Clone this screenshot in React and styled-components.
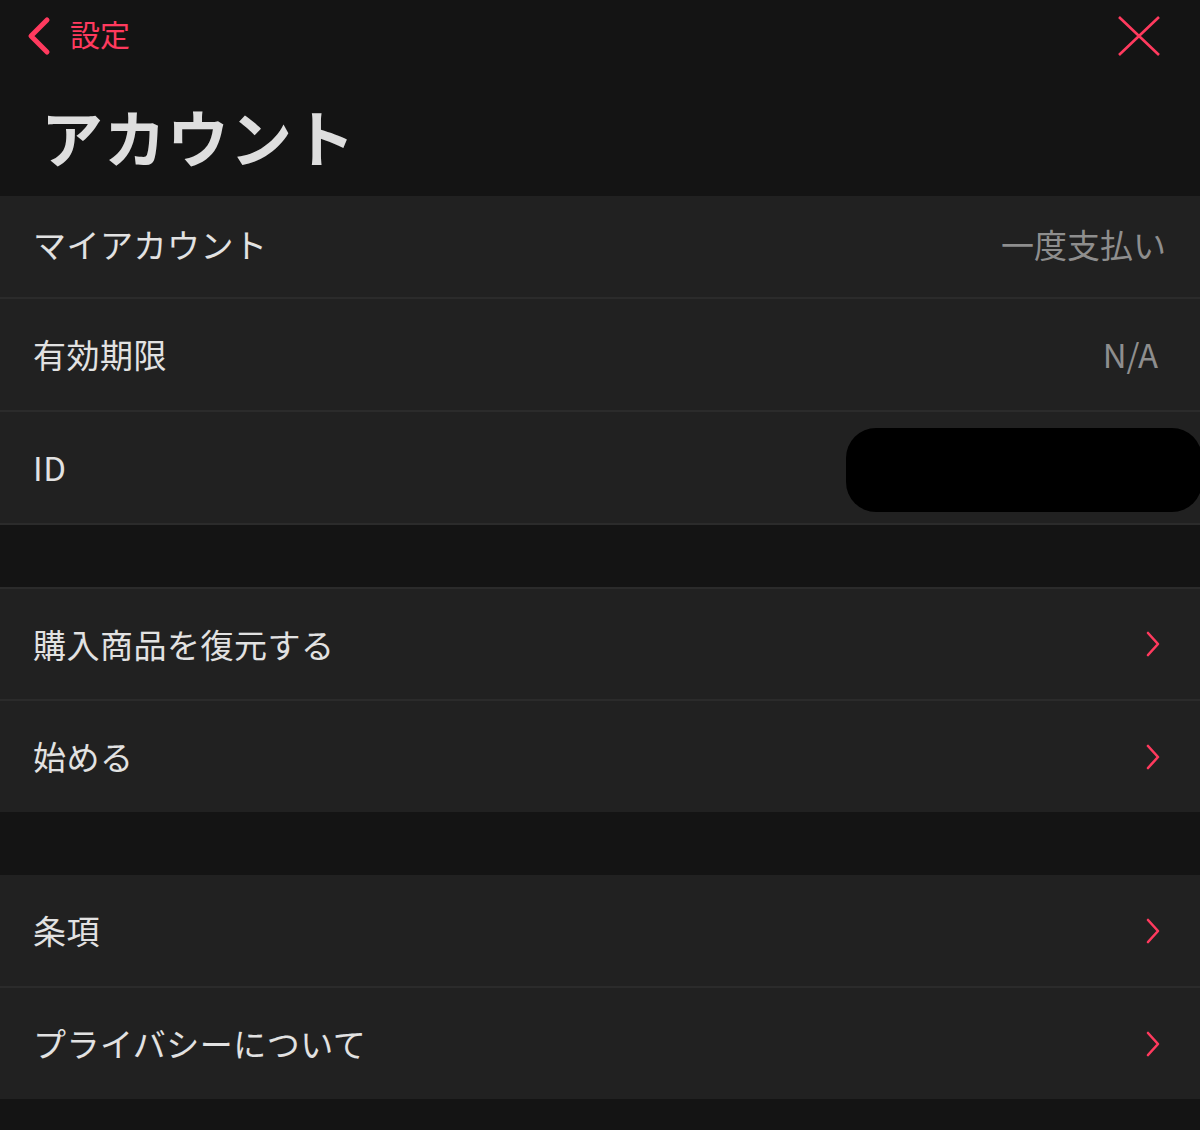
import styled, { createGlobalStyle } from 'styled-components';

const GlobalStyle = createGlobalStyle`
  html, body {
    margin: 0;
    padding: 0;
    background: #141414;
  }
  body {
    font-family: "Noto Sans CJK JP", "Noto Sans", sans-serif;
  }
`

const Page = styled.div`
  width: 1200px;
  min-height: 1130px;
  background: #141414;
  display: flex;
  flex-direction: column;
  overflow: hidden;
`

const Nav = styled.div`
  height: 76px;
  display: flex;
  align-items: center;
  justify-content: space-between;
  padding: 0 40px 0 26px;
`

const BackBtn = styled.a`
  display: flex;
  align-items: center;
  gap: 18px;
  color: #ff3a5e;
  font-size: 30px;
  line-height: 1;
  cursor: pointer;
  margin-top: -4px;
`

const BackText = styled.span`
  margin-top: -6px;
`

const CloseBtn = styled.a`
  display: flex;
  cursor: pointer;
  margin-top: -4px;
`

const Title = styled.h1`
  margin: 0;
  height: 120px;
  display: flex;
  align-items: center;
  padding: 0 0 0 41px;
  color: #dedede;
  font-size: 62px;
  font-weight: 700;
  line-height: 1;
  letter-spacing: 1px;
`

const Group = styled.div`
  display: flex;
  flex-direction: column;
  border-top: ${p => (p.$top ? '2px solid #2b2b2b' : 'none')};
  border-bottom: ${p => (p.$bottom ? '2px solid #2b2b2b' : 'none')};
`

const Gap = styled.div`
  height: ${p => p.$h}px;
`

const Row = styled.div`
  height: ${p => p.$h || 110}px;
  box-sizing: border-box;
  padding: 0 34px ${p => p.$pb || 0}px 33px;
  background: #212121;
  display: flex;
  align-items: center;
  justify-content: space-between;
  overflow: hidden;
  & + & {
    border-top: 2px solid #2b2b2b;
    height: ${p => (p.$h || 110) + 2}px;
  }
`

const Label = styled.span`
  color: #e2e2e2;
  font-size: 33px;
  line-height: 1;
  letter-spacing: 0.5px;
`

const Value = styled.span`
  color: #8e8e8e;
  font-size: 33px;
  line-height: 1;
  margin-right: ${p => p.$mr || 0}px;
`

const Redacted = styled.div`
  flex: none;
  width: 356px;
  height: 84px;
  background: #000;
  border-radius: 30px;
  margin-right: -36px;
  margin-top: 4px;
`

const Chevron = () => (
  <svg width="16" height="26" viewBox="0 0 16 26" style={{ marginRight: 5 }}>
    <path d="M3 2 L13 13 L3 24" fill="none" stroke="#ff3a5e" strokeWidth="2.6" strokeLinecap="round" strokeLinejoin="round" />
  </svg>
)

const App = () => {
  return (
    <Page>
      <GlobalStyle />
      <Nav>
        <BackBtn>
          <svg width="26" height="40" viewBox="0 0 26 40">
            <path d="M21 4 L5 20 L21 36" fill="none" stroke="#ff3a5e" strokeWidth="5" strokeLinecap="round" strokeLinejoin="round" />
          </svg>
          <BackText>設定</BackText>
        </BackBtn>
        <CloseBtn>
          <svg width="42" height="40" viewBox="0 0 42 40">
            <path d="M1 1 L41 39 M41 1 L1 39" fill="none" stroke="#ff3a5e" strokeWidth="2.6" />
          </svg>
        </CloseBtn>
      </Nav>
      <Title>アカウント</Title>

      <Group $bottom>
        <Row $h={101} $pb={5}>
          <Label>マイアカウント</Label>
          <Value>一度支払い</Value>
        </Row>
        <Row>
          <Label>有効期限</Label>
          <Value $mr={8}>N/A</Value>
        </Row>
        <Row>
          <Label>ID</Label>
          <Redacted />
        </Row>
      </Group>

      <Gap $h={62} />

      <Group $top>
        <Row>
          <Label>購入商品を復元する</Label>
          <Chevron />
        </Row>
        <Row>
          <Label>始める</Label>
          <Chevron />
        </Row>
      </Group>

      <Gap $h={63} />

      <Group>
        <Row $h={111}>
          <Label>条項</Label>
          <Chevron />
        </Row>
        <Row>
          <Label>プライバシーについて</Label>
          <Chevron />
        </Row>
      </Group>
    </Page>
  )
}

export default App;
